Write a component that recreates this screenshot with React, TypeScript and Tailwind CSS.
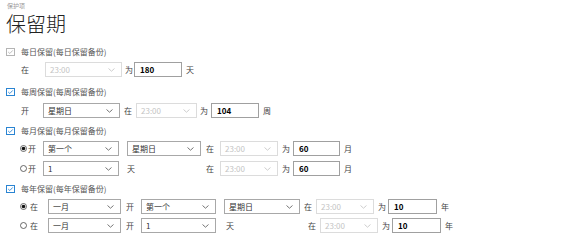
import React from "react";

const font = { fontFamily: '"Noto Sans CJK SC", "Noto Sans", sans-serif' };

function Chevron({ light }: { light?: boolean }) {
  return (
    <svg width="7" height="4" viewBox="0 0 7 4" className="shrink-0">
      <path d="M0.5 0.5 L3.5 3.2 L6.5 0.5" fill="none" stroke={light ? "#c8c8c8" : "#666"} strokeWidth="0.9" />
    </svg>
  );
}

function Select({ w, value, disabled }: { w: string; value: string; disabled?: boolean }) {
  return (
    <div
      className={`${w} h-[15px] flex items-center justify-between pl-[4px] pr-[6px] border ${
        disabled ? "border-[#dcdcdc] text-[#c4c4c4]" : "border-[#a8a8a8] text-[#333]"
      }`}
    >
      <span>{value}</span>
      <Chevron light={disabled} />
    </div>
  );
}

function Input({ w, value }: { w: string; value: string }) {
  return (
    <div className={`${w} h-[15px] flex items-center pl-[5px] border border-[#a0a0a0] font-bold text-black`}>
      {value}
    </div>
  );
}

function Check({ on }: { on?: boolean }) {
  const c = on ? "#2a84d2" : "#b4b4b4";
  return (
    <svg width="9" height="8" viewBox="0 0 9 8" className="shrink-0">
      <rect x="0.5" y="0.5" width="8" height="7" fill="none" stroke={c} strokeWidth="1" />
      <path d="M2.2 4 L3.8 5.5 L6.8 2.4" fill="none" stroke={c} strokeWidth="0.9" />
    </svg>
  );
}

function Radio({ on }: { on?: boolean }) {
  return (
    <svg width="7" height="7" viewBox="0 0 7 7" className="shrink-0">
      <circle cx="3.5" cy="3.5" r="3" fill="none" stroke="#444" strokeWidth="0.8" />
      {on && <circle cx="3.5" cy="3.5" r="1.8" fill="#111" />}
    </svg>
  );
}

function Heading({ on, text }: { on?: boolean; text: string }) {
  return (
    <div className="flex items-center h-[9px] pl-[6px] gap-[6px] text-[#555]">
      <Check on={on} />
      <span>{text}</span>
    </div>
  );
}

export default function App() {
  return (
    <div className="w-[576px] h-[240px] bg-white text-[8px] leading-none text-[#444] flex flex-col" style={font}>
      <div className="pl-[7px] pt-[3px] h-[10px] text-[6px] leading-[6px] text-[#999]">保护项</div>
      <div className="pl-[6px] mt-[4px] h-[20px] text-[20px] font-light text-[#222] leading-[20px]">保留期</div>

      {/* daily */}
      <div className="mt-[13px]">
        <Heading text="每日保留(每日保留备份)" />
      </div>
      <div className="mt-[6px] flex items-center pl-[21px]">
        <span className="w-[24px]">在</span>
        <Select w="w-[77px]" value="23:00" disabled />
        <span className="w-[12px] pl-[3px]">为</span>
        <Input w="w-[48px]" value="180" />
        <span className="pl-[4px]">天</span>
      </div>

      {/* weekly */}
      <div className="mt-[10px]">
        <Heading on text="每周保留(每周保留备份)" />
      </div>
      <div className="mt-[7px] flex items-center pl-[21px]">
        <span className="w-[22px]">开</span>
        <Select w="w-[77px]" value="星期日" />
        <span className="w-[16px] pl-[4px]">在</span>
        <Select w="w-[61px]" value="23:00" disabled />
        <span className="w-[14px] pl-[3px]">为</span>
        <Input w="w-[48px]" value="104" />
        <span className="pl-[4px]">周</span>
      </div>

      {/* monthly */}
      <div className="mt-[8px]">
        <Heading on text="每月保留(每月保留备份)" />
      </div>
      <div className="mt-[6px] flex flex-col gap-[5px]">
        <div className="flex items-center pl-[20px]">
          <Radio on />
          <span className="w-[16px] pl-[1px]">开</span>
          <Select w="w-[76px]" value="第一个" />
          <span className="w-[8px]" />
          <Select w="w-[74px]" value="星期日" />
          <span className="w-[19px] pl-[5px]">在</span>
          <Select w="w-[58px]" value="23:00" disabled />
          <span className="w-[15px] pl-[4px]">为</span>
          <Input w="w-[47px]" value="60" />
          <span className="pl-[4px]">月</span>
        </div>
        <div className="flex items-center pl-[20px]">
          <Radio />
          <span className="w-[16px] pl-[1px]">开</span>
          <Select w="w-[76px]" value="1" />
          <span className="w-[82px] pl-[8px]">天</span>
          <span className="w-[19px] pl-[5px]">在</span>
          <Select w="w-[58px]" value="23:00" disabled />
          <span className="w-[15px] pl-[4px]">为</span>
          <Input w="w-[47px]" value="60" />
          <span className="pl-[4px]">月</span>
        </div>
      </div>

      {/* yearly */}
      <div className="mt-[8px]">
        <Heading on text="每年保留(每年保留备份)" />
      </div>
      <div className="mt-[6px] flex flex-col gap-[4px]">
        <div className="flex items-center pl-[20px]">
          <Radio on />
          <span className="w-[21px] pl-[3px]">在</span>
          <Select w="w-[73px]" value="一月" />
          <span className="w-[20px] pl-[5px]">开</span>
          <Select w="w-[75px]" value="第一个" />
          <span className="w-[8px]" />
          <Select w="w-[76px]" value="星期日" />
          <span className="w-[16px] pl-[4px]">在</span>
          <Select w="w-[58px]" value="23:00" disabled />
          <span className="w-[14px] pl-[4px]">为</span>
          <Input w="w-[49px]" value="10" />
          <span className="pl-[4px]">年</span>
        </div>
        <div className="flex items-center pl-[20px]">
          <Radio />
          <span className="w-[21px] pl-[3px]">在</span>
          <Select w="w-[73px]" value="一月" />
          <span className="w-[20px] pl-[5px]">开</span>
          <Select w="w-[75px]" value="1" />
          <span className="w-[88px] pl-[10px]">天</span>
          <span className="w-[16px] pl-[4px]">在</span>
          <Select w="w-[58px]" value="23:00" disabled />
          <span className="w-[14px] pl-[4px]">为</span>
          <Input w="w-[49px]" value="10" />
          <span className="pl-[4px]">年</span>
        </div>
      </div>
    </div>
  );
}
